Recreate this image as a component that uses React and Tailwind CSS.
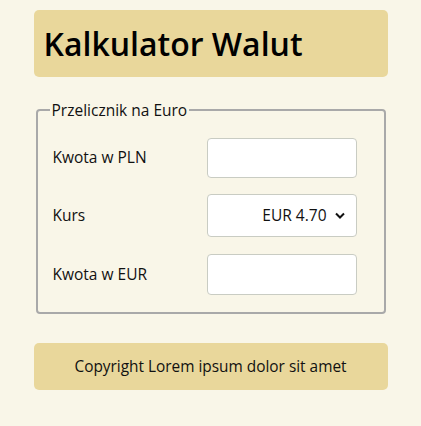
// Kalkulator Walut — PLN → EUR converter card.

const FONT = { fontFamily: '"Open Sans", "Noto Sans", sans-serif' };

function Row({ label, children }) {
  return (
    <div className="flex items-center justify-between pl-[3px] pr-[15px]">
      <label className="text-[15.5px] text-[#111]">{label}</label>
      {children}
    </div>
  );
}

export default function App() {
  return (
    <div className="min-h-[426px] bg-[#f9f6e8] pt-[10px]" style={FONT}>
      <div className="mx-auto w-[354px]">
        <header className="flex h-[67px] items-center rounded-[5px] bg-[#e9d79b] px-[10px]">
          <h1 className="text-[32px] font-semibold text-black">Kalkulator Walut</h1>
        </header>

        <fieldset className="mx-[2px] mt-[23px] rounded-[4px] border-2 border-[#a9a9a9] px-[12px] pb-[17px] pt-[18px]">
          <legend className="px-[2px] text-[15.5px] leading-[20px] text-[#111]">Przelicznik na Euro</legend>
          <div className="flex flex-col">
            <Row label="Kwota w PLN">
              <input className="h-[40px] w-[150px] rounded-[4px] border border-[#c9ccc3] bg-white px-2" />
            </Row>
            <div className="mt-[16px]">
              <Row label="Kurs">
                <div className="relative">
                  <select
                    defaultValue="4.70"
                    className="h-[43px] w-[150px] appearance-none rounded-[4px] border border-[#c9ccc3] bg-white pr-[29px] text-right text-[15.5px] text-[#111] [text-align-last:right]"
                  >
                    <option value="4.70">EUR 4.70</option>
                  </select>
                  <svg
                    className="pointer-events-none absolute right-[12px] top-[18px]"
                    width="10"
                    height="7"
                    viewBox="0 0 10 7"
                    fill="none"
                    stroke="#111"
                    strokeWidth="2"
                  >
                    <path d="M1 1.5l4 4 4-4" />
                  </svg>
                </div>
              </Row>
            </div>
            <div className="mt-[17px]">
              <Row label="Kwota w EUR">
                <input className="h-[41px] w-[150px] rounded-[4px] border border-[#c9ccc3] bg-white px-2" />
              </Row>
            </div>
          </div>
        </fieldset>

        <footer className="mt-[29px] flex h-[47px] items-center justify-center rounded-[5px] bg-[#e9d79b] text-[15.4px] text-[#111]">
          Copyright Lorem ipsum dolor sit amet
        </footer>
      </div>
    </div>
  );
}
